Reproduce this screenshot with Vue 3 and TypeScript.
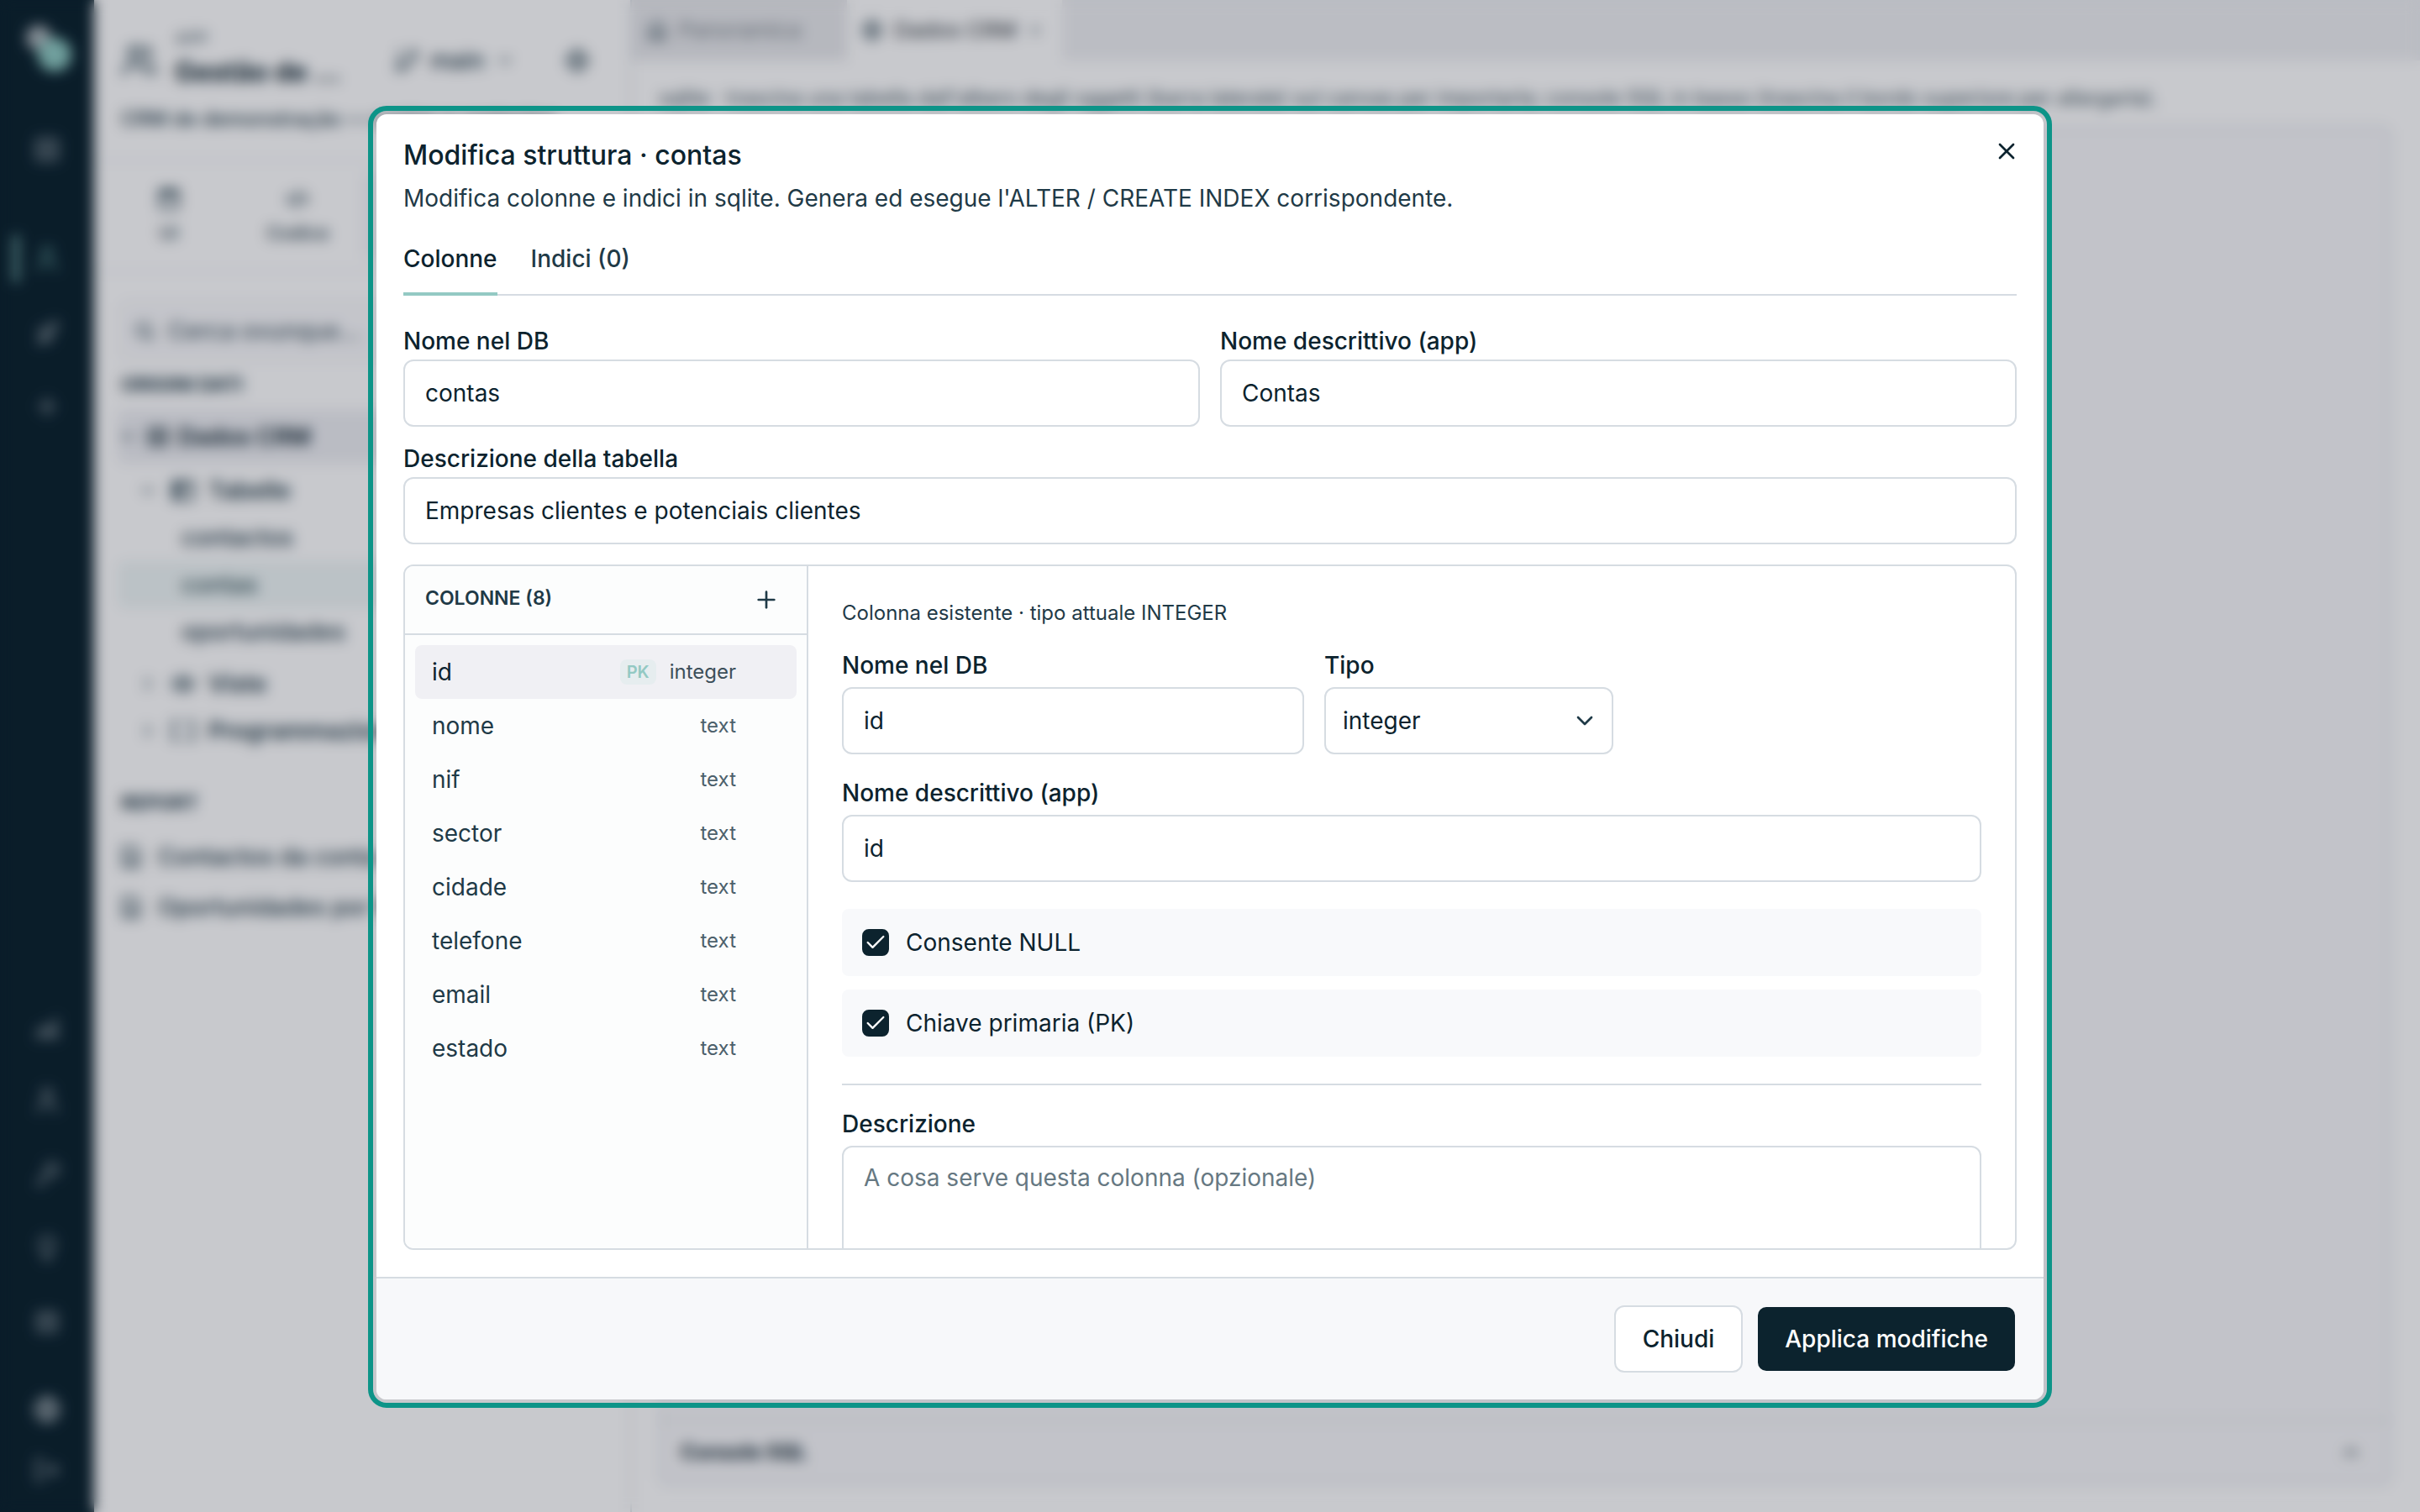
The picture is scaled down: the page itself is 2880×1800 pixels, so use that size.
<script setup lang="ts">
import { ref } from 'vue'

interface Column {
  name: string
  type: string
  pk?: boolean
}

interface TreeRow {
  label: string
  level: 0 | 1 | 2
  icon?: string
  chevron?: string
  active?: boolean
}

const icons: Record<string, string[]> = {
  x: ['M18 6 6 18', 'm6 6 12 12'],
  plus: ['M5 12h14', 'M12 5v14'],
  check: ['M20 6 9 17l-5-5'],
  down: ['m6 9 6 6 6-6'],
  right: ['m9 18 6-6-6-6'],
  up: ['m18 15-6-6-6 6'],
  grid: ['M4 4h16v16H4z', 'M4 12h16', 'M12 4v16'],
  user: ['M19 21v-2a4 4 0 0 0-4-4H9a4 4 0 0 0-4 4v2', 'M12 3a4 4 0 1 1 0 8 4 4 0 0 1 0-8'],
  users: ['M16 21v-2a4 4 0 0 0-4-4H6a4 4 0 0 0-4 4v2', 'M9 3a4 4 0 1 1 0 8 4 4 0 0 1 0-8', 'M22 21v-2a4 4 0 0 0-3-3.87', 'M16 3.13a4 4 0 0 1 0 7.75'],
  rocket: ['m9 15-4 5c3 0 5-1 6-3', 'M9 15c2-7 6-11 11-11 0 5-4 9-11 11z', 'M5 11l4-3M13 19l3-4'],
  chart: ['M3 20h18', 'M5 16l5-4 4 3 6-9', 'M9 20v-4M14 20v-3M19 20v-9'],
  key: ['M4 20l10-10', 'M16 3a5 5 0 1 1 0 10 5 5 0 0 1 0-10', 'M6 18l3 3'],
  bulb: ['M12 3a6 6 0 0 1 3 11v3H9v-3a6 6 0 0 1 3-11z', 'M10 21h4'],
  list: ['M5 5h14v14H5z', 'M8 9h8M8 14h8'],
  globe: ['M12 3a9 9 0 1 1 0 18 9 9 0 0 1 0-18', 'M3 12h18', 'M12 3c4 5 4 13 0 18', 'M12 3c-4 5-4 13 0 18'],
  exit: ['M9 20H4V4h5', 'M20 12H9', 'm16 8 4 4-4 4'],
  branch: ['M6 3v12', 'M18 9a3 3 0 1 0 0-6 3 3 0 0 0 0 6', 'M6 21a3 3 0 1 0 0-6 3 3 0 0 0 0 6', 'M18 9a9 9 0 0 1-9 9'],
  gear: ['M12 4a8 8 0 1 1 0 16 8 8 0 0 1 0-16', 'M12 9a3 3 0 1 1 0 6 3 3 0 0 1 0-6', 'M12 2v3M12 19v3M2 12h3M19 12h3'],
  window: ['M4 4h16v16H4z', 'M4 9h16', 'M4 6h16'],
  code: ['m7 8-4 4 4 4', 'm17 8 4 4-4 4', 'm14 5-4 14'],
  database: ['M4 5h16v14H4z', 'M4 12h16', 'M12 5v14'],
  search: ['M11 4a7 7 0 1 1 0 14 7 7 0 0 1 0-14', 'm21 21-5-5'],
  table: ['M3 4h18v16H3z', 'M3 9h18', 'M9 4v16', 'M6 4v16'],
  eye: ['M2 12c5-8 15-8 20 0-5 8-15 8-20 0z', 'M12 9a3 3 0 1 1 0 6 3 3 0 0 1 0-6'],
  brackets: ['M8 4H3v16h5', 'M16 4h5v16h-5'],
  file: ['M5 3h10l4 4v14H5z', 'M9 12h6M9 16h6'],
  home: ['M4 10l8-7 8 7v11H4z', 'M9 21v-8h6v8'],
}

const railTop = ['user', 'rocket', 'plus']
const railBottom = ['chart', 'user', 'key', 'bulb', 'list']

const tools = [
  { icon: 'window', label: 'UI' },
  { icon: 'code', label: 'Codice' },
  { icon: 'database', label: 'Dati' },
  { icon: 'gear', label: 'Altro' },
]

const tree: TreeRow[] = [
  { label: 'Dados CRM', level: 0, icon: 'database', chevron: 'down' },
  { label: 'Tabelle', level: 1, icon: 'table', chevron: 'down' },
  { label: 'contactos', level: 2 },
  { label: 'contas', level: 2, active: true },
  { label: 'oportunidades', level: 2 },
  { label: 'Viste', level: 1, icon: 'eye', chevron: 'right' },
  { label: 'Programmazione', level: 1, icon: 'brackets', chevron: 'right' },
]

const reports = ['Contactos da conta', 'Oportunidades por fase']

const columns: Column[] = [
  { name: 'id', type: 'integer', pk: true },
  { name: 'nome', type: 'text' },
  { name: 'nif', type: 'text' },
  { name: 'sector', type: 'text' },
  { name: 'cidade', type: 'text' },
  { name: 'telefone', type: 'text' },
  { name: 'email', type: 'text' },
  { name: 'estado', type: 'text' },
]

const selected = ref(0)
const tableName = ref('contas')
const tableLabel = ref('Contas')
const tableDescription = ref('Empresas clientes e potenciais clientes')
const columnName = ref('id')
const columnType = ref('integer')
const columnLabel = ref('id')
const nullable = ref(true)
const primary = ref(true)
const columnDescription = ref('')
</script>

<template>
  <div class="app">
    <div class="page" inert>
      <nav class="rail">
        <svg class="logo" viewBox="0 0 60 60">
          <circle cx="20" cy="17" r="15" fill="#a9b2b7" />
          <circle cx="39" cy="37" r="20" fill="#8fcac2" />
        </svg>
        <button class="rail-item rail-first"><svg class="icon" viewBox="0 0 24 24"><path v-for="d in icons.grid" :key="d" :d="d" /></svg></button>
        <button v-for="(name, i) in railTop" :key="name" class="rail-item" :class="{ current: i === 0 }">
          <svg class="icon" viewBox="0 0 24 24"><path v-for="d in icons[name]" :key="d" :d="d" /></svg>
        </button>
        <span class="rail-space"></span>
        <button v-for="name in railBottom" :key="name" class="rail-item">
          <svg class="icon" viewBox="0 0 24 24"><path v-for="d in icons[name]" :key="d" :d="d" /></svg>
        </button>
        <button class="rail-item rail-low rail-bright"><svg class="icon" viewBox="0 0 24 24"><path v-for="d in icons.globe" :key="d" :d="d" /></svg></button>
        <button class="rail-item rail-low"><svg class="icon" viewBox="0 0 24 24"><path v-for="d in icons.exit" :key="d" :d="d" /></svg></button>
      </nav>

      <aside class="side">
        <header class="project">
          <div class="project-row">
            <svg class="icon big" viewBox="0 0 24 24"><path v-for="d in icons.users" :key="d" :d="d" /></svg>
            <div class="project-name">
              <small>APP</small>
              <strong>Gestão de ...</strong>
            </div>
            <button class="branch">
              <svg class="icon" viewBox="0 0 24 24"><path v-for="d in icons.branch" :key="d" :d="d" /></svg>
              main
              <svg class="icon tiny" viewBox="0 0 24 24"><path v-for="d in icons.down" :key="d" :d="d" /></svg>
            </button>
            <button class="settings"><svg class="icon" viewBox="0 0 24 24"><path v-for="d in icons.gear" :key="d" :d="d" /></svg></button>
          </div>
          <p class="project-about">CRM de demonstração — contas e contactos</p>
        </header>
        <div class="tools">
          <button v-for="(tool, i) in tools" :key="tool.label" class="tool" :class="{ current: i === 2 }">
            <svg class="icon" viewBox="0 0 24 24"><path v-for="d in icons[tool.icon]" :key="d" :d="d" /></svg>
            {{ tool.label }}
          </button>
        </div>
        <label class="search">
          <svg class="icon small" viewBox="0 0 24 24"><path v-for="d in icons.search" :key="d" :d="d" /></svg>
          <input type="search" placeholder="Cerca ovunque..." />
        </label>
        <h3>ORIGINI DATI</h3>
        <ul class="tree">
          <li v-for="row in tree" :key="row.label" :class="['level-' + row.level, { active: row.active }]">
            <svg v-if="row.chevron" class="icon tiny" viewBox="0 0 24 24"><path v-for="d in icons[row.chevron]" :key="d" :d="d" /></svg>
            <svg v-if="row.icon" class="icon" viewBox="0 0 24 24"><path v-for="d in icons[row.icon]" :key="d" :d="d" /></svg>
            {{ row.label }}
          </li>
        </ul>
        <h3 class="reports-title">REPORT</h3>
        <ul class="reports">
          <li v-for="report in reports" :key="report">
            <svg class="icon" viewBox="0 0 24 24"><path v-for="d in icons.file" :key="d" :d="d" /></svg>
            {{ report }}
          </li>
        </ul>
      </aside>

      <main class="main">
        <div class="doc-tabs">
          <button class="doc-tab"><svg class="icon small" viewBox="0 0 24 24"><path v-for="d in icons.home" :key="d" :d="d" /></svg>Panoramica</button>
          <button class="doc-tab current">
            <svg class="icon small" viewBox="0 0 24 24"><path v-for="d in icons.globe" :key="d" :d="d" /></svg>Dados CRM
            <svg class="icon micro" viewBox="0 0 24 24"><path v-for="d in icons.x" :key="d" :d="d" /></svg>
          </button>
        </div>
        <p class="hint">sqlite · trascina una tabella dall'albero degli oggetti (barra laterale) sul canvas per importarla; console SQL in basso (trascina il bordo superiore per allargarla).</p>
        <div class="canvas"></div>
        <div class="console">
          <strong>Console SQL</strong>
          <svg class="icon small" viewBox="0 0 24 24"><path v-for="d in icons.up" :key="d" :d="d" /></svg>
        </div>
      </main>
    </div>

    <div class="overlay">
      <section class="dialog" role="dialog" aria-modal="true" aria-labelledby="dialog-title">
        <button class="close" aria-label="Chiudi finestra">
          <svg class="icon" viewBox="0 0 24 24"><path v-for="d in icons.x" :key="d" :d="d" /></svg>
        </button>
        <div class="content">
          <h2 id="dialog-title">Modifica struttura · contas</h2>
          <p class="subtitle">Modifica colonne e indici in sqlite. Genera ed esegue l'ALTER / CREATE INDEX corrispondente.</p>
          <div class="tabs" role="tablist">
            <button role="tab" class="tab current" aria-selected="true">Colonne</button>
            <button role="tab" class="tab" aria-selected="false">Indici (0)</button>
          </div>
          <div class="pair">
            <div class="field">
              <label for="table-name">Nome nel DB</label>
              <input id="table-name" v-model="tableName" type="text" />
            </div>
            <div class="field">
              <label for="table-label">Nome descrittivo (app)</label>
              <input id="table-label" v-model="tableLabel" type="text" />
            </div>
          </div>
          <div class="field">
            <label for="table-description">Descrizione della tabella</label>
            <input id="table-description" v-model="tableDescription" type="text" />
          </div>

          <div class="panel">
            <div class="list">
              <div class="list-head">
                <h3>COLONNE (8)</h3>
                <button class="add" aria-label="Aggiungi colonna">
                  <svg class="icon" viewBox="0 0 24 24"><path v-for="d in icons.plus" :key="d" :d="d" /></svg>
                </button>
              </div>
              <div class="rows">
                <button v-for="(column, i) in columns" :key="column.name" class="row" :class="{ selected: i === selected }" @click="selected = i">
                  <span class="row-name">{{ column.name }}</span>
                  <span v-if="column.pk" class="badge">PK</span>
                  <span class="row-type">{{ column.type }}</span>
                </button>
              </div>
            </div>

            <form class="detail" @submit.prevent>
              <p class="info">Colonna esistente · tipo attuale INTEGER</p>
              <div class="triple">
                <div class="field">
                  <label for="column-name">Nome nel DB</label>
                  <input id="column-name" v-model="columnName" type="text" />
                </div>
                <div class="field">
                  <label for="column-type">Tipo</label>
                  <div class="select">
                    <select id="column-type" v-model="columnType">
                      <option>integer</option>
                      <option>text</option>
                    </select>
                    <svg class="icon" viewBox="0 0 24 24"><path v-for="d in icons.down" :key="d" :d="d" /></svg>
                  </div>
                </div>
              </div>
              <div class="field">
                <label for="column-label">Nome descrittivo (app)</label>
                <input id="column-label" v-model="columnLabel" type="text" />
              </div>
              <div class="checks">
                <label class="check">
                  <span class="box">
                    <input v-model="nullable" type="checkbox" />
                    <svg v-if="nullable" class="icon" viewBox="0 0 24 24"><path v-for="d in icons.check" :key="d" :d="d" /></svg>
                  </span>
                  Consente NULL
                </label>
                <label class="check">
                  <span class="box">
                    <input v-model="primary" type="checkbox" />
                    <svg v-if="primary" class="icon" viewBox="0 0 24 24"><path v-for="d in icons.check" :key="d" :d="d" /></svg>
                  </span>
                  Chiave primaria (PK)
                </label>
              </div>
              <hr />
              <div class="field">
                <label for="column-description">Descrizione</label>
                <textarea id="column-description" v-model="columnDescription" placeholder="A cosa serve questa colonna (opzionale)"></textarea>
              </div>
            </form>
          </div>
        </div>
        <footer class="footer">
          <button class="button">Chiudi</button>
          <button class="button primary">Applica modifiche</button>
        </footer>
      </section>
    </div>
  </div>
</template>

<style>
html,
body {
  margin: 0;
  overflow: hidden;
}
</style>

<style scoped>
.app {
  --ink: #0c232e;
  --soft: #1f3a47;
  --line: #d6dce2;
  --mint: #93c9c3;
  height: 100vh;
  overflow: hidden;
  background: #fff;
  color: var(--ink);
  font: 400 28px/40px Inter, sans-serif;
}
.app * {
  box-sizing: border-box;
}
h2,
h3,
p,
ul {
  margin: 0;
  padding: 0;
  list-style: none;
}
button,
input,
select,
textarea {
  margin: 0;
  padding: 0;
  border: 0;
  background: none;
  color: inherit;
  font: inherit;
}
.icon {
  width: 32px;
  height: 32px;
  flex: none;
  fill: none;
  stroke: currentColor;
  stroke-width: 2;
  stroke-linecap: round;
  stroke-linejoin: round;
}
.icon.big { width: 44px; height: 44px; }
.icon.small { width: 28px; height: 28px; }
.icon.tiny { width: 24px; height: 24px; }
.icon.micro { width: 20px; height: 20px; }

/* Workspace behind the dialog */
.page {
  display: flex;
  height: 100%;
}
.rail {
  width: 112px;
  flex: none;
  display: flex;
  flex-direction: column;
  align-items: center;
  gap: 8px;
  padding: 28px 0 18px;
  background: var(--ink);
  color: #8f9ba2;
}
.logo {
  width: 60px;
  height: 60px;
}
.rail-item {
  width: 100%;
  height: 80px;
  flex: none;
  display: grid;
  place-items: center;
}
.rail-item .icon {
  width: 36px;
  height: 36px;
}
.rail-first { margin: 42px 0; }
.rail-item.current {
  color: #5f9794;
  background: linear-gradient(#7fb8b2, #7fb8b2) 16px 50% / 6px 56px no-repeat;
}
.rail-space { flex: 1; }
.rail-low { height: 64px; }
.rail-bright {
  margin-top: 24px;
  color: #c3cbcf;
}
.side {
  width: 640px;
  flex: none;
  border-right: 2px solid var(--line);
  font-weight: 500;
  color: var(--soft);
}
.project {
  height: 192px;
  padding: 32px 32px 0;
  border-bottom: 2px solid #eaedf0;
}
.project-row {
  display: flex;
  align-items: center;
  height: 80px;
}
.project-name {
  display: flex;
  flex-direction: column;
  width: 236px;
  margin-left: 20px;
}
.project-name small {
  font-size: 20px;
  line-height: 28px;
  color: #66777f;
}
.project-name strong {
  font-size: 32px;
  line-height: 52px;
  color: var(--ink);
}
.branch {
  display: flex;
  align-items: center;
  gap: 12px;
  margin-left: 24px;
}
.settings {
  display: grid;
  margin-left: 58px;
}
.project-about {
  font-size: 24px;
  line-height: 40px;
  margin-top: 10px;
  white-space: nowrap;
}
.tools {
  display: flex;
  padding: 12px 12px;
  height: 132px;
  border-bottom: 2px solid #eaedf0;
}
.tool {
  flex: 1;
  display: flex;
  flex-direction: column;
  align-items: center;
  justify-content: center;
  gap: 8px;
  font-size: 22px;
  line-height: 32px;
  border-radius: 12px;
}
.tool.current { background: #f4f5f8; }
.search {
  display: flex;
  align-items: center;
  gap: 14px;
  height: 72px;
  margin: 34px 28px 12px 30px;
  padding: 0 14px;
  border: 2px solid #edeff2;
  border-radius: 12px;
  background: #fafafc;
}
.search input { flex: 1; }
.search input::placeholder { color: #4c606b; opacity: 1; }
.side h3 {
  padding: 0 32px;
  font-size: 23px;
  line-height: 32px;
  font-weight: 700;
}
.tree { padding: 14px 28px 0; }
.tree li {
  display: flex;
  align-items: center;
  gap: 12px;
  height: 56px;
  font-weight: 600;
  white-space: nowrap;
  border-radius: 8px;
}
.tree .level-0 {
  gap: 8px;
  height: 64px;
  margin-bottom: 4px;
  background: #eeeff3;
  color: var(--ink);
}
.tree .level-1 { padding-left: 24px; gap: 14px; }
.tree .level-2 { padding-left: 76px; font-weight: 500; }
.tree .level-2 + .level-1 { margin-top: 6px; }
.tree .active { background: #eff6f6; color: #35545a; }
.reports-title { margin-top: 42px; }
.reports { padding: 18px 28px; }
.reports li {
  display: flex;
  align-items: center;
  gap: 16px;
  height: 60px;
  white-space: nowrap;
}
.main {
  flex: 1;
  min-width: 0;
  display: flex;
  flex-direction: column;
  padding-bottom: 32px;
}
.doc-tabs {
  display: flex;
  height: 72px;
  background: #eff0f3;
}
.doc-tab {
  display: flex;
  align-items: center;
  gap: 12px;
  width: 256px;
  padding-left: 16px;
  font-size: 26px;
  background: #e8e9ec;
  color: #7b858b;
}
.doc-tab .icon { color: #4c606b; }
.doc-tab.current {
  background: #fff;
  color: #4c5359;
  font-weight: 500;
}
.hint {
  padding: 24px 32px 12px;
  font-size: 24px;
  line-height: 42px;
  white-space: nowrap;
  color: #3b505b;
}
.canvas,
.console {
  margin: 0 34px 0 32px;
  border: 2px solid var(--line);
  background: #f8f8fa;
}
.canvas {
  flex: 1;
  border-bottom: 0;
  border-radius: 12px 12px 0 0;
}
.console {
  display: flex;
  align-items: center;
  justify-content: space-between;
  height: 78px;
  padding: 0 32px 0 24px;
  border-radius: 0 0 12px 12px;
  font-size: 24px;
}

/* Dialog */
.overlay {
  position: fixed;
  inset: 0;
  display: flex;
  align-items: center;
  justify-content: center;
  padding-top: 2px;
  box-sizing: border-box;
  background: rgba(6, 10, 28, 0.22);
  backdrop-filter: blur(8px);
}
.dialog {
  position: relative;
  display: flex;
  flex-direction: column;
  width: 90%;
  max-width: 1984px;
  height: 85vh;
  border-radius: 12px;
  outline: 6px solid #0d9488;
  outline-offset: 4px;
  background: #fff;
}
.close {
  position: absolute;
  top: 16px;
  right: 16px;
  width: 56px;
  height: 56px;
  display: grid;
  place-items: center;
}
.content {
  flex: 1;
  min-height: 0;
  display: flex;
  flex-direction: column;
  padding: 24px 32px 32px;
}
h2 {
  font-size: 32px;
  line-height: 50px;
  font-weight: 500;
}
.subtitle {
  margin-top: 6px;
  color: var(--soft);
}
.tabs {
  display: flex;
  gap: 40px;
  margin: 32px 0 40px;
  box-shadow: inset 0 -2px var(--line);
}
.tab {
  padding-bottom: 20px;
  border-bottom: 4px solid transparent;
  font-weight: 500;
  color: var(--soft);
}
.tab.current {
  border-color: var(--mint);
  color: var(--ink);
}
.pair {
  display: grid;
  grid-template-columns: 1fr 1fr;
  gap: 24px;
  margin-bottom: 24px;
}
.field {
  display: flex;
  flex-direction: column;
  gap: 8px;
}
.field label {
  line-height: 28px;
  font-weight: 500;
}
.field input,
.field select,
.field textarea {
  width: 100%;
  height: 80px;
  padding: 0 24px;
  border: 2px solid var(--line);
  border-radius: 12px;
  background: #fff;
}
.panel {
  flex: 1;
  min-height: 0;
  display: flex;
  margin-top: 24px;
  border: 2px solid var(--line);
  border-radius: 12px;
  overflow: hidden;
}
.list {
  width: 480px;
  flex: none;
  border-right: 2px solid var(--line);
  background: #fcfdfd;
}
.list-head {
  display: flex;
  align-items: center;
  justify-content: space-between;
  height: 82px;
  padding: 0 24px;
  border-bottom: 2px solid var(--line);
  color: var(--soft);
}
.list-head h3 {
  padding-bottom: 4px;
  font-size: 23px;
  line-height: 32px;
  font-weight: 600;
}
.add {
  width: 48px;
  height: 48px;
  display: grid;
  place-items: center;
}
.rows {
  display: flex;
  flex-direction: column;
  padding: 12px;
}
.row {
  display: flex;
  align-items: center;
  gap: 16px;
  height: 64px;
  padding: 0 72px 0 20px;
  border-radius: 8px;
  color: var(--soft);
  text-align: left;
}
.row.selected {
  background: #f0f0f4;
  color: var(--ink);
}
.row-name { flex: 1; }
.row-type {
  font-size: 24px;
  color: #4c606b;
}
.selected .row-type { color: #3d4f5a; }
.badge {
  padding: 0 8px;
  border-radius: 8px;
  background: #e6edef;
  color: var(--mint);
  font-size: 20px;
  line-height: 30px;
  font-weight: 600;
}
.detail {
  flex: 1;
  min-width: 0;
  display: flex;
  flex-direction: column;
  gap: 32px;
  padding: 40px;
  overflow: hidden;
}
.detail > * { flex: none; }
.detail .field { gap: 12px; }
.info {
  font-size: 24px;
  line-height: 32px;
  color: var(--soft);
}
.triple {
  display: grid;
  grid-template-columns: 275fr 172fr 207fr;
  gap: 24px;
}
.select {
  display: grid;
  align-items: center;
}
.select > * { grid-area: 1 / 1; }
.select select {
  appearance: none;
  padding: 0 56px 0 20px;
}
.select .icon {
  justify-self: end;
  margin-right: 18px;
  color: var(--soft);
  pointer-events: none;
}
.checks {
  display: flex;
  flex-direction: column;
  gap: 16px;
}
.check {
  display: flex;
  align-items: center;
  gap: 20px;
  height: 80px;
  padding: 0 24px;
  border-radius: 8px;
  background: #f8f9fb;
}
.box {
  display: grid;
  place-items: center;
}
.box > * { grid-area: 1 / 1; }
.box input {
  appearance: none;
  width: 32px;
  height: 32px;
  border: 2px solid var(--ink);
  border-radius: 8px;
}
.box input:checked { background: var(--ink); }
.box .icon {
  width: 28px;
  height: 28px;
  color: #fff;
  pointer-events: none;
}
hr {
  width: 100%;
  height: 2px;
  margin: 0;
  border: 0;
  background: var(--line);
}
.detail .field textarea {
  height: 160px;
  padding: 16px 24px;
  resize: none;
}
textarea::placeholder {
  color: #667882;
  opacity: 1;
}
.footer {
  display: flex;
  justify-content: flex-end;
  gap: 16px;
  padding: 32px;
  border-top: 2px solid var(--line);
  border-radius: 0 0 12px 12px;
  background: #f7f8fa;
}
.button {
  height: 80px;
  padding: 0 32px;
  border: 2px solid var(--line);
  border-radius: 12px;
  background: #fff;
  font-weight: 500;
}
.button.primary {
  border-color: transparent;
  background: var(--ink) padding-box;
  color: #fff;
}
</style>
